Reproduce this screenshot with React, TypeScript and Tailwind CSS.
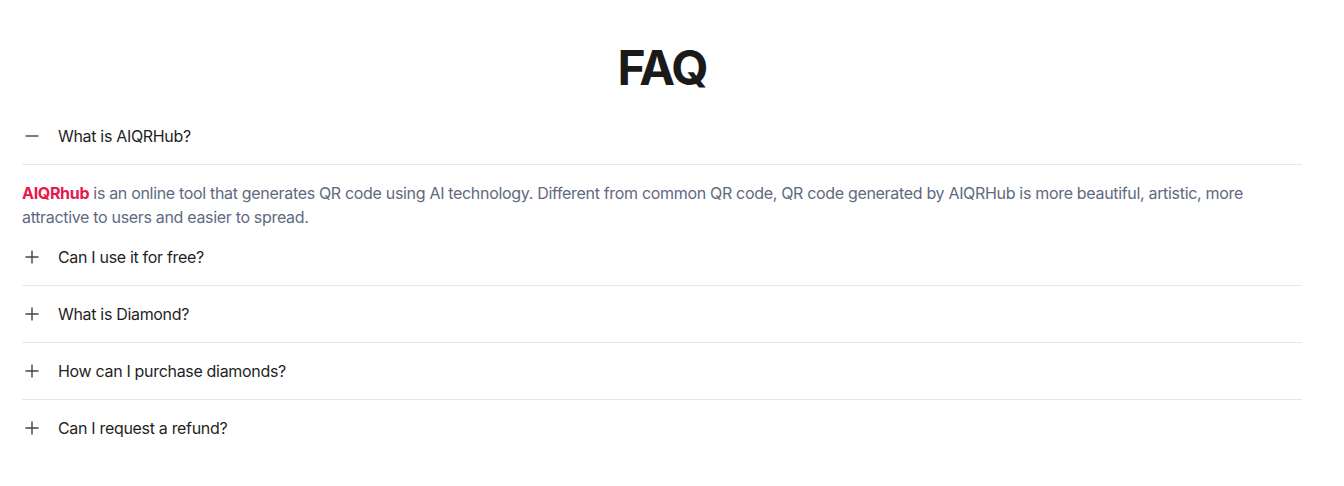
const FAQS = [
  {
    q: "What is AIQRHub?",
    open: true,
  },
  { q: "Can I use it for free?" },
  { q: "What is Diamond?" },
  { q: "How can I purchase diamonds?" },
  { q: "Can I request a refund?" },
];

function Minus() {
  return (
    <svg width="16" height="16" viewBox="0 0 16 16" fill="none">
      <path d="M1.5 8H14.5" stroke="currentColor" strokeWidth="1.4" />
    </svg>
  );
}

function Plus() {
  return (
    <svg width="16" height="16" viewBox="0 0 16 16" fill="none">
      <path d="M1.5 8H14.5M8 1.5V14.5" stroke="currentColor" strokeWidth="1.4" />
    </svg>
  );
}

export default function App() {
  return (
    <div
      className="min-h-screen bg-white"
      style={{ fontFamily: "Inter, 'Liberation Sans', sans-serif" }}
    >
      <div className="w-[1280px] ml-[22px] pt-[44px] pb-10">
        <h2 className="text-center text-5xl leading-none font-bold text-[#1a1a1a] tracking-[-0.04em]">
          FAQ
        </h2>

        <div className="mt-4 flex flex-col">
          {FAQS.map((item, i) => (
            <div key={item.q}>
              <button
                className={
                  "w-full flex items-center gap-[18px] py-4 text-left text-base leading-6 tracking-[-0.02em] text-[#1f1f1f] " +
                  (i < FAQS.length - 1 ? "border-b border-[#e5e5ea]" : "")
                }
              >
                <span className="w-4 ml-[2px] flex-shrink-0 text-[#444]">
                  {item.open ? <Minus /> : <Plus />}
                </span>
                <span>{item.q}</span>
              </button>
              {item.open && (
                <p className="pt-4 text-base leading-6 tracking-[-0.02em] text-[#5e6a80]">
                  <span className="font-bold text-[#e8194a]">AIQRhub</span> is an
                  online tool that generates QR code using AI technology. Different from
                  common QR code, QR code generated by AIQRHub is more beautiful, artistic,
                  more attractive to users and easier to spread.
                </p>
              )}
            </div>
          ))}
        </div>
      </div>
    </div>
  );
}
